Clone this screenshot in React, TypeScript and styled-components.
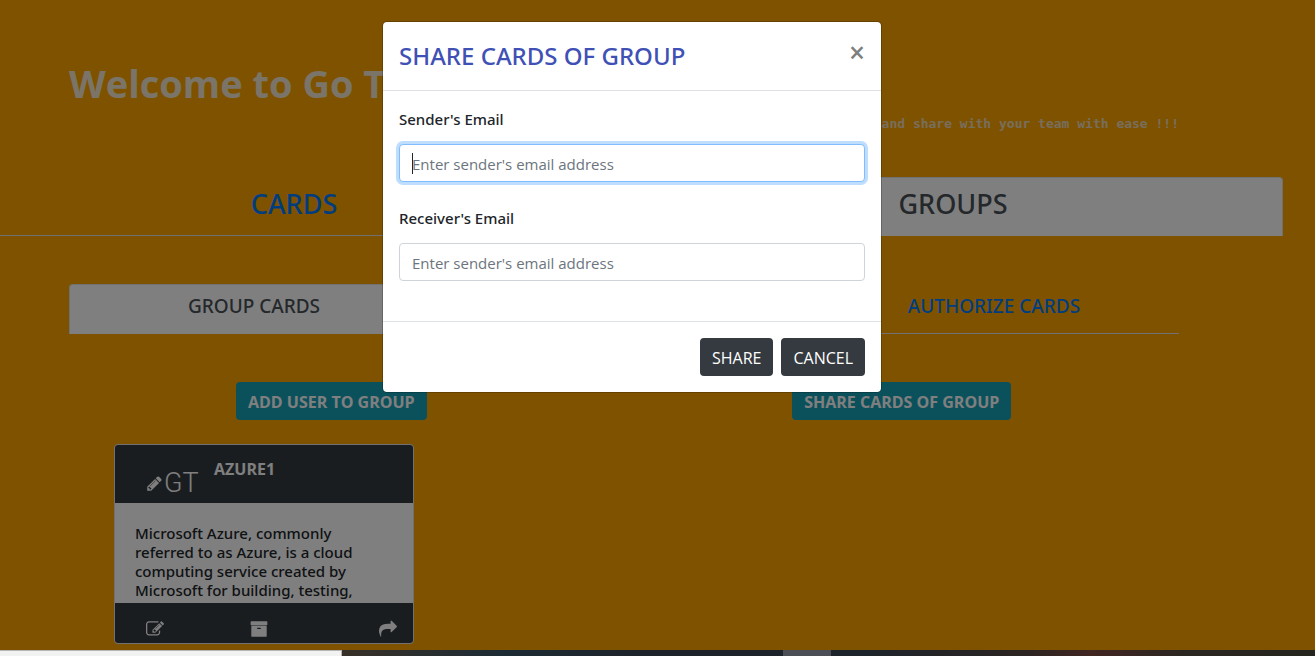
import React from "react";
import styled, { createGlobalStyle } from "styled-components";

const sans = `"Open Sans", "Noto Sans", sans-serif`;
const medium = `"Noto Sans", "Open Sans", sans-serif`;

const GlobalStyle = createGlobalStyle`
  *, *::before, *::after { box-sizing: border-box; }
  body {
    margin: 0;
    background: #ffa500;
    color: #212529;
    font-family: ${sans};
    font-size: 15px;
    line-height: 24px;
  }
  h1, h2, p, ul { margin: 0; padding: 0; }
  button, input { font: inherit; }
`;

const Screen = styled.div`
  display: flex;
  flex-direction: column;
  height: 100vh;
`;

const Viewport = styled.div`
  position: relative;
  flex: 1;
  min-height: 0;
  overflow: hidden;
`;

const Page = styled.main`
  padding-right: 32px;
`;

const Container = styled.div`
  max-width: 1110px;
  margin: 0 auto;
`;

const Section = styled.div`
  padding-right: 35px;
`;

const Hero = styled.header`
  padding-top: 54px;
  height: 177px;
`;

const Title = styled.h1`
  color: #f5ead0;
  font-size: 38px;
  line-height: 58px;
  font-weight: 700;
`;

const Tagline = styled.p`
  color: #f0dcb8;
  font-family: "DejaVu Sans Mono", monospace;
  font-size: 13px;
  font-weight: 700;
  text-align: right;
`;

const Tabs = styled.nav<{ $columns: string }>`
  display: grid;
  grid-template-columns: ${(p) => p.$columns};
  border-bottom: 1px solid #dee2e6;
`;

const Tab = styled.a<{ $active?: boolean; $large?: boolean; $last?: boolean }>`
  ${(p) => p.$last && "grid-column: 3;"}
  margin-bottom: -1px;
  padding: ${(p) => (p.$large ? "9px 16px 15px" : "8px 16px 14px")};
  border: 1px solid ${(p) => (p.$active ? "#dee2e6" : "transparent")};
  border-bottom-color: ${(p) => (p.$active ? "#fff" : "transparent")};
  border-radius: 4px 4px 0 0;
  background: ${(p) => (p.$active ? "#fff" : "transparent")};
  color: ${(p) => (p.$active ? "#495057" : "#007bff")};
  font-family: ${medium};
  font-size: ${(p) => (p.$large ? "27px" : "19px")};
  line-height: ${(p) => (p.$large ? "33px" : "26px")};
  font-weight: 500;
  text-align: center;
  text-decoration: none;
`;

const GroupTabs = styled(Tabs)`
  margin-top: 48px;
`;

const Actions = styled.div`
  display: grid;
  grid-template-columns: 1fr 1fr;
  justify-items: center;
  margin: 48px -8px 24px -23px;
`;

const Button = styled.button<{ $tone: "info" | "dark" }>`
  height: 38px;
  padding: 1px 11px 0;
  border: 1px solid transparent;
  border-radius: 4px;
  background: ${(p) => (p.$tone === "info" ? "#17a2b8" : "#343a40")};
  color: #fff;
  font-size: 16px;
  font-weight: ${(p) => (p.$tone === "info" ? 700 : 400)};
`;

const Card = styled.article`
  width: 300px;
  margin-left: 45px;
  overflow: hidden;
  border: 1px solid #dee2e6;
  border-radius: 4px;
  background: #fff;
`;

const CardHeader = styled.div`
  display: flex;
  height: 58px;
  padding: 12px 31px 0;
  background: #343a40;
  color: #fff;
`;

const Brand = styled.div`
  display: flex;
  align-items: center;
  width: 68px;
  padding-top: 6px;
`;

const Monogram = styled.span`
  margin-left: 1px;
  font-family: Roboto, sans-serif;
  font-size: 27px;
  font-weight: 300;
  line-height: 28px;
`;

const CardTitle = styled.h2`
  font-size: 16px;
  line-height: 24px;
  font-weight: 700;
`;

const CardBody = styled.p`
  height: 100px;
  padding: 21px 36px 0 20px;
  overflow: hidden;
  font-family: ${medium};
  font-weight: 500;
  line-height: 19px;
`;

const CardFooter = styled.div`
  display: grid;
  grid-template-columns: 104px 1fr auto;
  height: 40px;
  padding: 17px 16px 0 31px;
  background: #343a40;
`;

const IconButton = styled.button`
  display: flex;
  height: 20px;
  padding: 0;
  border: 0;
  background: none;
  color: #fff;
`;

const Glyph = styled.svg`
  display: block;
  flex: none;
  fill: currentColor;
`;

const Overlay = styled.div`
  position: absolute;
  inset: 0;
  padding: 21px 51px 0 0;
  background: rgba(0, 0, 0, 0.5);
`;

const Dialog = styled.form`
  max-width: 500px;
  margin: 0 auto;
  border: 1px solid rgba(0, 0, 0, 0.2);
  border-radius: 5px;
  background: #fff;
  background-clip: padding-box;
`;

const DialogHeader = styled.div`
  display: flex;
  justify-content: space-between;
  align-items: flex-start;
  padding: 16px;
  border-bottom: 1px solid #dee2e6;
`;

const DialogTitle = styled.h2`
  color: #3f51b5;
  font-family: ${medium};
  font-size: 24px;
  line-height: 36px;
  font-weight: 500;
`;

const Close = styled.button`
  padding: 0;
  border: 0;
  background: none;
  color: #7f7f7f;
  font-size: 28px;
  font-weight: 600;
  line-height: 28px;
`;

const DialogBody = styled.div`
  display: grid;
  gap: 24px;
  padding: 16px 16px 40px;
`;

const Field = styled.div`
  display: grid;
  gap: 13px;
`;

const Label = styled.label`
  font-family: ${medium};
  font-weight: 500;
`;

const InputWrap = styled.div`
  position: relative;
`;

const Input = styled.input<{ $focused?: boolean }>`
  display: block;
  width: 100%;
  height: 38px;
  padding: 1px 12px 0;
  border: 1px solid ${(p) => (p.$focused ? "#80bdff" : "#ced4da")};
  border-radius: 4px;
  outline: 0;
  box-shadow: ${(p) => (p.$focused ? "0 0 0 3px rgba(0, 123, 255, 0.25)" : "none")};
  background: #fff;
  color: #495057;
  caret-color: transparent;
  &::placeholder { color: #6c757d; opacity: 1; }
`;

const Caret = styled.span`
  position: absolute;
  top: 9px;
  left: 13px;
  width: 1px;
  height: 21px;
  background: #212529;
`;

const DialogFooter = styled.div`
  display: flex;
  justify-content: flex-end;
  gap: 8px;
  padding: 16px;
  border-top: 1px solid #dee2e6;
`;

const Taskbar = styled.footer`
  display: flex;
  height: 6px;
  background: linear-gradient(90deg, #383028 26%, #1d2b34 38%, #1d2129 50%, #1c232b 65%, #2b2422 78%, #412521 83%, #2b2621 90%, #25241f);
`;

const SearchBox = styled.div`
  width: 26%;
  border: solid #b5b5b5;
  border-width: 1px 1px 0 0;
  background: #f2f2f2;
`;

const ActiveApp = styled.div`
  width: 48px;
  margin-left: auto;
  margin-right: 484px;
  background: #4b4e54;
`;

const paths = {
  pencil:
    "M491 1536l91-91-235-235-91 91v107h128v128h107zm523-928q0-22-22-22-10 0-17 7l-542 542q-7 7-7 17 0 22 22 22 10 0 17-7l542-542q7-7 7-17zm-54-192l416 416-832 832h-416v-416zm683 96q0 53-37 90l-166 166-416-416 166-165q36-38 90-38 53 0 91 38l235 234q37 39 37 91z",
  edit:
    "M888 1184l116-116-152-152-116 116v56h96v96h56zm440-720q-16-16-33 1l-350 350q-17 17-1 33t33-1l350-350q17-17 1-33zm80 594v190q0 119-84.5 203.5t-203.5 84.5h-832q-119 0-203.5-84.5t-84.5-203.5v-832q0-119 84.5-203.5t203.5-84.5h832q63 0 117 25 15 7 18 23 3 17-9 29l-49 49q-14 14-32 8-23-6-45-6h-832q-66 0-113 47t-47 113v832q0 66 47 113t113 47h832q66 0 113-47t47-113v-126q0-13 9-22l64-64q15-15 35-7t20 29zm-96-738l288 288-672 672h-288v-288zm444 132l-92 92-288-288 92-92q28-28 68-28t68 28l152 152q28 28 28 68t-28 68z",
  archive:
    "M1088 832q0-26-19-45t-45-19h-256q-26 0-45 19t-19 45 19 45 45 19h256q26 0 45-19t19-45zm576-192v960q0 26-19 45t-45 19h-1408q-26 0-45-19t-19-45v-960q0-26 19-45t45-19h1408q26 0 45 19t19 45zm64-448v256q0 26-19 45t-45 19h-1536q-26 0-45-19t-19-45v-256q0-26 19-45t45-19h1536q26 0 45 19t19 45z",
  share:
    "M1792 640q0 26-19 45l-512 512q-19 19-45 19t-45-19-19-45v-256h-224q-98 0-175.5 6t-154 21.5-133 42.5-105.5 69.5-80 101-48.5 138.5-17.5 181q0 55 5 123 0 6 2.5 23.5t2.5 26.5q0 15-8.5 25t-23.5 10q-16 0-28-17-7-9-13-22t-13.5-30-10.5-24q-127-285-127-451 0-199 53-333 162-403 875-403h224v-256q0-26 19-45t45-19 45 19l512 512q19 19 19 45z",
};

const Icon = ({ name, size }: { name: keyof typeof paths; size: number }) => (
  <Glyph viewBox="0 0 1792 1792" width={size} height={size} aria-hidden="true">
    <path d={paths[name]} />
  </Glyph>
);

export default function App() {
  return (
    <>
      <GlobalStyle />
      <Screen>
        <Viewport>
          <Page>
            <Section>
              <Container>
                <Hero>
                  <Title>Welcome to Go T</Title>
                  <Tagline>and share with your team with ease !!!</Tagline>
                </Hero>
              </Container>
            </Section>
            <Tabs $columns="588fr 35fr 660fr">
              <Tab href="#cards" $large>CARDS</Tab>
              <Tab href="#groups" $large $active $last>GROUPS</Tab>
            </Tabs>
            <Section>
              <Container>
                <GroupTabs $columns="1fr 1fr 1fr">
                  <Tab href="#group-cards" $active>GROUP CARDS</Tab>
                  <Tab href="#authorize" $last>AUTHORIZE CARDS</Tab>
                </GroupTabs>
                <Actions>
                  <Button type="button" $tone="info">ADD USER TO GROUP</Button>
                  <Button type="button" $tone="info">SHARE CARDS OF GROUP</Button>
                </Actions>
                <Card>
                  <CardHeader>
                    <Brand>
                      <Icon name="pencil" size={17} />
                      <Monogram>GT</Monogram>
                    </Brand>
                    <CardTitle>AZURE1</CardTitle>
                  </CardHeader>
                  <CardBody>
                    Microsoft Azure, commonly referred to as Azure, is a cloud computing service
                    created by Microsoft for building, testing,
                  </CardBody>
                  <CardFooter>
                    <IconButton type="button" aria-label="Edit"><Icon name="edit" size={18} /></IconButton>
                    <IconButton type="button" aria-label="Archive"><Icon name="archive" size={18} /></IconButton>
                    <IconButton type="button" aria-label="Share"><Icon name="share" size={18} /></IconButton>
                  </CardFooter>
                </Card>
              </Container>
            </Section>
          </Page>
          <Overlay>
            <Dialog role="dialog" aria-labelledby="share-title">
              <DialogHeader>
                <DialogTitle id="share-title">SHARE CARDS OF GROUP</DialogTitle>
                <Close type="button" aria-label="Close">×</Close>
              </DialogHeader>
              <DialogBody>
                <Field>
                  <Label htmlFor="sender">Sender's Email</Label>
                  <InputWrap>
                    <Input id="sender" type="email" placeholder="Enter sender's email address" $focused />
                    <Caret />
                  </InputWrap>
                </Field>
                <Field>
                  <Label htmlFor="receiver">Receiver's Email</Label>
                  <Input id="receiver" type="email" placeholder="Enter sender's email address" />
                </Field>
              </DialogBody>
              <DialogFooter>
                <Button type="button" $tone="dark">SHARE</Button>
                <Button type="button" $tone="dark">CANCEL</Button>
              </DialogFooter>
            </Dialog>
          </Overlay>
        </Viewport>
        <Taskbar>
          <SearchBox />
          <ActiveApp />
        </Taskbar>
      </Screen>
    </>
  );
}
